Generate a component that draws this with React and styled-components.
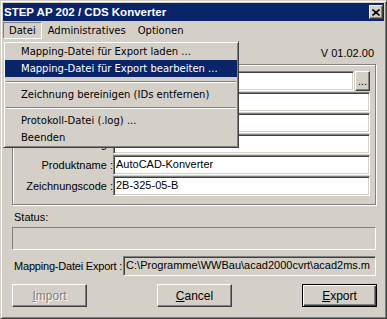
import styled, { createGlobalStyle } from "styled-components";

const GlobalStyle = createGlobalStyle`
  html, body {
    margin: 0;
    padding: 0;
    background: #d4d0c8;
  }
  body {
    font-family: "Liberation Sans", Arial, sans-serif;
    font-size: 11px;
    color: #000;
  }
`;

const Window = styled.div`
  position: relative;
  box-sizing: border-box;
  width: 387px;
  height: 319px;
  padding: 2px;
  background: #d4d0c8;
  border: 1px solid;
  border-color: #d4d0c8 #404040 #404040 #d4d0c8;
  box-shadow: inset 1px 1px 0 #fff, inset -1px -1px 0 #808080;
  display: flex;
  flex-direction: column;
`;

const TitleBar = styled.div`
  height: 18px;
  background: #0a246a;
  display: flex;
  align-items: center;
  justify-content: space-between;
  padding: 0 1px 0 1px;
`;

const Title = styled.span`
  color: #fff;
  font-weight: bold;
  font-size: 11.5px;
  white-space: nowrap;
`;

const CaptionButton = styled.div`
  box-sizing: border-box;
  width: 14px;
  height: 14px;
  background: #d4d0c8;
  border: 1px solid;
  border-color: #fff #404040 #404040 #fff;
  box-shadow: inset -1px -1px 0 #808080;
  display: flex;
  align-items: center;
  justify-content: center;
`;

const MenuBar = styled.div`
  height: 19px;
  display: flex;
  align-items: flex-start;
  padding-top: 1px;
  box-sizing: border-box;
  font-family: "DejaVu Sans", Verdana, sans-serif;
  font-size: 10px;
`;

const MenuTitle = styled.div`
  box-sizing: border-box;
  height: 17px;
  line-height: 15px;
  padding: 0 5px;
  border: 1px solid;
  border-color: ${(p) => (p.$open ? "#808080 #fff #fff #808080" : "transparent")};
  white-space: nowrap;
`;

const Dropdown = styled.div`
  position: absolute;
  top: 40px;
  left: 2px;
  width: 236px;
  box-sizing: border-box;
  padding: 1px;
  background: #d4d0c8;
  border: 1px solid;
  border-color: #d4d0c8 #404040 #404040 #d4d0c8;
  box-shadow: inset 1px 1px 0 #fff, inset -1px -1px 0 #808080;
  font-family: "DejaVu Sans", Verdana, sans-serif;
  font-size: 10px;
  z-index: 2;
`;

const DropItem = styled.div`
  height: 17px;
  line-height: 17px;
  padding-left: 16px;
  white-space: nowrap;
  background: ${(p) => (p.$active ? "#0a246a" : "transparent")};
  color: ${(p) => (p.$active ? "#fff" : "#000")};
`;

const Separator = styled.div`
  height: 9px;
  display: flex;
  align-items: center;
  padding: 0 1px;

  &::after {
    content: "";
    flex: 1;
    border-top: 1px solid #808080;
    border-bottom: 1px solid #fff;
  }
`;

const Body = styled.div`
  flex: 1;
  display: flex;
  flex-direction: column;
  padding: 6px 7px 0 9px;
`;

const Version = styled.div`
  text-align: right;
  line-height: 14px;
  padding-right: 3px;
`;

const GroupBox = styled.div`
  margin: 4px 1px 0 0;
  border: 1px solid #808080;
  box-shadow: inset 1px 1px 0 #fff, 1px 1px 0 #fff;
  padding: 6px 5px 8px 1px;
  display: grid;
  grid-template-columns: 99px 1fr;
  row-gap: 1px;
`;

const Label = styled.div`
  text-align: right;
  line-height: 20px;
  white-space: nowrap;
`;

const Field = styled.div`
  box-sizing: border-box;
  height: 20px;
  flex: 1;
  min-width: 0;
  padding: 0 2px;
  line-height: 16px;
  white-space: nowrap;
  overflow: hidden;
  background: ${(p) => (p.$readonly ? "#d4d0c8" : "#fff")};
  border: 1px solid;
  border-color: #808080 #fff #fff #808080;
  box-shadow: inset 1px 1px 0 #404040, inset -1px -1px 0 #d4d0c8;
`;

const FieldGroup = styled.div`
  display: flex;
  align-items: center;
`;

const SmallButton = styled.div`
  box-sizing: border-box;
  width: 15px;
  height: 20px;
  margin-left: 1px;
  border: 1px solid;
  border-color: #fff #404040 #404040 #fff;
  box-shadow: inset -1px -1px 0 #808080;
  text-align: center;
  line-height: 18px;
`;

const StatusLabel = styled.div`
  margin-top: 5px;
  line-height: 14px;
  padding-left: 2px;
`;

const StatusBox = styled.div`
  margin: 3px 1px 0 0;
  height: 23px;
  box-sizing: border-box;
  border: 1px solid;
  border-color: #808080 #fff #fff #808080;
`;

const MappingRow = styled.div`
  margin: 6px 1px 0 0;
  display: flex;
  align-items: center;
  gap: 1px;
`;

const MappingLabel = styled.div`
  padding-left: 2px;
  white-space: nowrap;
  letter-spacing: -0.2px;
`;

const ButtonRow = styled.div`
  margin-top: 8px;
  display: flex;
  justify-content: space-between;
`;

const PushButton = styled.div`
  box-sizing: border-box;
  width: 75px;
  height: 23px;
  display: flex;
  align-items: center;
  justify-content: center;
  background: #d4d0c8;
  border: 1px solid;
  border-color: ${(p) => (p.$default ? "#000" : "#fff #404040 #404040 #fff")};
  box-shadow: ${(p) =>
    p.$default
      ? "inset 1px 1px 0 #fff, inset -1px -1px 0 #404040, inset -2px -2px 0 #808080"
      : "inset -1px -1px 0 #808080"};
  color: ${(p) => (p.$disabled ? "#808080" : "#000")};
  text-shadow: ${(p) => (p.$disabled ? "1px 1px 0 #fff" : "none")};
  font-size: 12px;
`;

// the first labels are hidden behind the open "Datei" menu
const fields = [
  { id: "org", label: "", value: "", browse: true },
  { id: "autor", label: "", value: "" },
  { id: "sys", label: "", value: "" },
  { id: "ord", label: "Ordnung :", value: "" },
  { id: "prod", label: "Produktname :", value: "AutoCAD-Konverter" },
  { id: "code", label: "Zeichnungscode :", value: "2B-325-05-B" },
];

export default function App() {
  return (
    <>
      <GlobalStyle />
      <Window>
        <TitleBar>
          <Title>STEP AP 202 / CDS Konverter</Title>
          <CaptionButton>
            <svg width="8" height="7" viewBox="0 0 8 7">
              <path d="M0.5 0.5 L7.5 6.5 M7.5 0.5 L0.5 6.5" stroke="#000" strokeWidth="1.6" />
            </svg>
          </CaptionButton>
        </TitleBar>
        <MenuBar>
          <MenuTitle $open>Datei</MenuTitle>
          <MenuTitle>Administratives</MenuTitle>
          <MenuTitle>Optionen</MenuTitle>
        </MenuBar>
        <Body>
          <Version>V 01.02.00</Version>
          <GroupBox>
            {fields.flatMap((f) => [
              <Label key={f.id + "-l"}>{f.label}</Label>,
              f.browse ? (
                <FieldGroup key={f.id + "-f"}>
                  <Field>{f.value}</Field>
                  <SmallButton>...</SmallButton>
                </FieldGroup>
              ) : (
                <Field key={f.id + "-f"}>{f.value}</Field>
              ),
            ])}
          </GroupBox>
          <StatusLabel>Status:</StatusLabel>
          <StatusBox />
          <MappingRow>
            <MappingLabel>Mapping-Datei Export :</MappingLabel>
            <Field $readonly>C:\Programme\WWBau\acad2000cvrt\acad2ms.m</Field>
          </MappingRow>
          <ButtonRow>
            <PushButton $disabled>
              <span><u>I</u>mport</span>
            </PushButton>
            <PushButton>
              <span><u>C</u>ancel</span>
            </PushButton>
            <PushButton $default>
              <span><u>E</u>xport</span>
            </PushButton>
          </ButtonRow>
        </Body>
        <Dropdown>
          <DropItem>Mapping-Datei für Export laden ...</DropItem>
          <DropItem $active>Mapping-Datei für Export bearbeiten ...</DropItem>
          <Separator />
          <DropItem>Zeichnung bereinigen (IDs entfernen)</DropItem>
          <Separator />
          <DropItem>Protokoll-Datei (.log) ...</DropItem>
          <DropItem>Beenden</DropItem>
        </Dropdown>
      </Window>
    </>
  );
}
